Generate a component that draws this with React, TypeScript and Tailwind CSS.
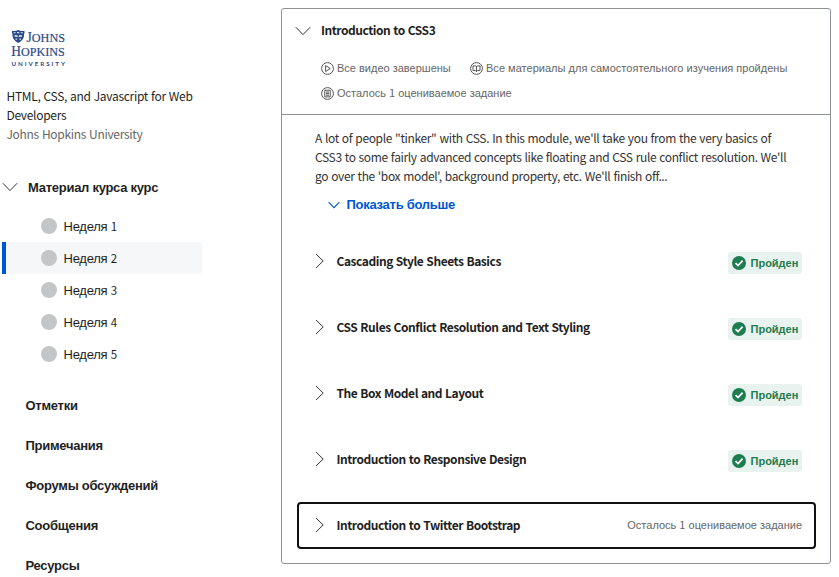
import React from "react";

const latin = "font-['Noto_Sans_CJK_SC','Noto_Sans',sans-serif]";
const headingText = `${latin} text-[12px] leading-5 font-bold tracking-[-0.45px] [word-spacing:0.7px] whitespace-nowrap`;

function Digit({ children, className = "" }: { children: React.ReactNode; className?: string }) {
  return <span className={`${latin} leading-none ${className}`}>{children}</span>;
}

function Chevron({ size, right, className = "" }: { size: number; right?: boolean; className?: string }) {
  return (
    <svg width={size} height={size} viewBox="0 0 16 16" fill="none" stroke="currentColor" strokeWidth={size < 16 ? 1.4 : 1} className={`shrink-0 ${className}`}>
      {right ? <path d="M5 1 12.200 8 5 15" /> : <path d="M.8 4.2 8 11.6 15.2 4.2" />}
    </svg>
  );
}

function Logo() {
  return (
    <svg width="56" height="40" viewBox="0 0 56 40" className="block overflow-visible" fill="#2b4a86">
      <path d="M1 1.700Q4.300 2.300 7.200 1 10 2.300 13.500 1.700V4Q12.800 5 13 7 12.500 11 7.200 14 2 11 1.500 7 1.700 5 1 4Z" />
      <path d="M2.500 3.200h2.200v1H2.500zM6 3h2.300v1.200H6zM9.700 3.200h2.200v1H9.700zM3.500 6.200q2-.8 3.200.4v1.700q-1.500-1-3-.4ZM11 6.200q-2-.8-3.200.4v1.700q1.500-1 3-.4ZM4.500 9.500h1.700v1.300H4.500zM8.300 9.500H10v1.300H8.300z" fill="#d4dbe8" />
      <g fontFamily="'Liberation Serif', serif" stroke="#2b4a86" strokeWidth=".2">
        <text x="15.500" y="13" fontSize="15" textLength="38.500" lengthAdjust="spacingAndGlyphs">J<tspan fontSize="13.500">OHNS</tspan></text>
        <text x=".3" y="27.200" fontSize="15" textLength="53.500" lengthAdjust="spacingAndGlyphs">H<tspan fontSize="13.500">OPKINS</tspan></text>
      </g>
      <text x=".5" y="36.800" fontSize="6.200" fontWeight="bold" fontFamily="Lato, sans-serif" textLength="53.500">UNIVERSITY</text>
    </svg>
  );
}

function RoundIcon({ kind }: { kind: "play" | "book" | "list" }) {
  return (
    <svg width="13" height="13" viewBox="0 0 13 13" fill="none" stroke="#555" strokeWidth="1" className="shrink-0">
      <circle cx="6.500" cy="6.500" r="5.900" />
      {kind === "play" && <path d="M4.600 3.500v6l4.700-3z" />}
      {kind === "book" && <path d="M6.500 4v6M3 3.900h2.500l1 .6 1-.6H10v4.700H7.500l-1 .6-1-.6H3z" />}
      {kind === "list" && <path d="M3.800 3.200h5.400v6.700H3.800zM5 5h3M5 6.600h3M5 8.200h3" />}
    </svg>
  );
}

function Passed() {
  return (
    <div className="mt-1 flex h-[22px] w-[74px] shrink-0 items-center rounded-[3px] bg-[#e8f2ee] pl-1">
      <svg width="14" height="14" viewBox="0 0 14 14" className="shrink-0">
        <circle cx="7" cy="7" r="7" fill="#1d7c50" />
        <path d="m3.500 7.200 2.500 2.400 4.600-5" fill="none" stroke="#fff" strokeWidth="1.700" />
      </svg>
      <span className="ml-[4.500px] whitespace-nowrap text-[11px] leading-[22px] font-bold text-[#1d7c50]">Пройден</span>
    </div>
  );
}

const weeks = [1, 2, 3, 4, 5];
const links = ["Отметки", "Примечания", "Форумы обсуждений", "Сообщения", "Ресурсы"];
const lessons = [
  "Cascading Style Sheets Basics",
  "CSS Rules Conflict Resolution and Text Styling",
  "The Box Model and Layout",
  "Introduction to Responsive Design",
];

export default function App() {
  return (
    <div className="flex h-[577px] w-[839px] overflow-hidden bg-white font-['Liberation_Sans','Noto_Sans_CJK_SC',sans-serif] text-[#1f1f1f]">
      <aside className="w-[281px] shrink-0 pt-[29px]">
        <div className="pl-[11px]"><Logo /></div>
        <div className={`mt-[17px] pl-[6.500px] text-[12px] leading-[19px] tracking-[-0.3px] [word-spacing:0.6px] ${latin}`}>
          <p className="whitespace-nowrap">HTML, CSS, and Javascript for Web<br />Developers</p>
          <p className="text-[#666]">Johns Hopkins University</p>
        </div>
        <div className="mt-[34px] flex h-5 items-center pl-[2px]">
          <Chevron size={16} className="text-[#333]" />
          <span className="ml-[10px] whitespace-nowrap pt-[2px] text-[13px] font-bold tracking-[-0.27px]">Материал курса курс</span>
        </div>
        <ul className="mt-[13px]">
          {weeks.map((n) => (
            <li key={n} className={`ml-[2px] flex h-8 w-[200px] items-center rounded-r-[3px] border-l-4 ${n === 2 ? "border-[#0056d2] bg-[#f5f7f8]" : "border-transparent"}`}>
              <span className="ml-[35px] size-4 rounded-full bg-[#c4c5c7]" />
              <span className="ml-[6.500px] whitespace-nowrap pt-px text-[13px] leading-5 tracking-[-0.25px]">Неделя <Digit className="text-[11.500px]">{n}</Digit></span>
            </li>
          ))}
        </ul>
        <nav className="mt-4 pl-[25.500px]">
          {links.map((text) => (
            <div key={text} className="flex h-10 items-center whitespace-nowrap text-[13px] font-bold tracking-[-0.27px]">{text}</div>
          ))}
        </nav>
      </aside>
      <main className="mt-2 h-[556px] w-[550px] shrink-0 rounded-[3px] border border-[#8e9196]">
        <header className="h-[106px] border-b border-[#8e9196] pt-3">
          <div className="flex h-5 items-center pl-[13px]">
            <Chevron size={16} className="text-[#333]" />
            <h2 className={`ml-[10px] pb-[2px] ${headingText}`}>Introduction to CSS3</h2>
          </div>
          <div className="mt-[17px] pl-[39px] text-[11px] text-[#666]">
            <div className="flex h-5 items-center">
              <RoundIcon kind="play" /><span className="ml-[3px] w-[133px] pt-px whitespace-nowrap">Все видео завершены</span>
              <RoundIcon kind="book" /><span className="ml-[3px] pt-px tracking-[0.02px] whitespace-nowrap">Все материалы для самостоятельного изучения пройдены</span>
            </div>
            <div className="mt-[5px] flex h-5 items-center">
              <RoundIcon kind="list" /><span className="ml-[3px] whitespace-nowrap">Осталось <Digit className="text-[11px]">1</Digit> оцениваемое задание</span>
            </div>
          </div>
        </header>
        <div className={`mt-[13px] pl-[33px] text-[12px] leading-[19px] tracking-[-0.35px] [word-spacing:0.65px] whitespace-nowrap text-[#333] ${latin}`}>
          <p>A lot of people "tinker" with CSS. In this module, we'll take you from the very basics of</p>
          <p>CSS3 to some fairly advanced concepts like floating and CSS rule conflict resolution. We'll</p>
          <p>go over the 'box model', background property, etc. We'll finish off...</p>
        </div>
        <div className="mt-[10px] flex h-5 items-center pl-[46px] text-[#0056d2]">
          <Chevron size={12} />
          <span className="ml-[6.500px] text-[13px] font-bold tracking-[-0.27px]">Показать больше</span>
        </div>
        <div className="mt-[13px]">
          {lessons.map((t) => (
            <div key={t} className="flex h-[66px] items-center pr-[28px] pl-[29px]">
              <Chevron size={16} right className="text-[#333]" />
              <h3 className={`ml-[9.500px] grow ${headingText}`}>{t}</h3>
              <Passed />
            </div>
          ))}
        </div>
        <div className="mt-[10px] ml-[15px] flex h-[47px] w-[519px] items-center rounded-[4px] border-2 border-[#111] pr-[12px] pl-[12px]">
          <Chevron size={16} right className="mb-px text-[#333]" />
          <h3 className={`ml-[9.500px] grow pb-[2px] ${headingText}`}>Introduction to Twitter Bootstrap</h3>
          <span className="pb-[2px] text-[11px] leading-5 whitespace-nowrap text-[#666]">Осталось <Digit className="text-[11px]">1</Digit> оцениваемое задание</span>
        </div>
      </main>
    </div>
  );
}
